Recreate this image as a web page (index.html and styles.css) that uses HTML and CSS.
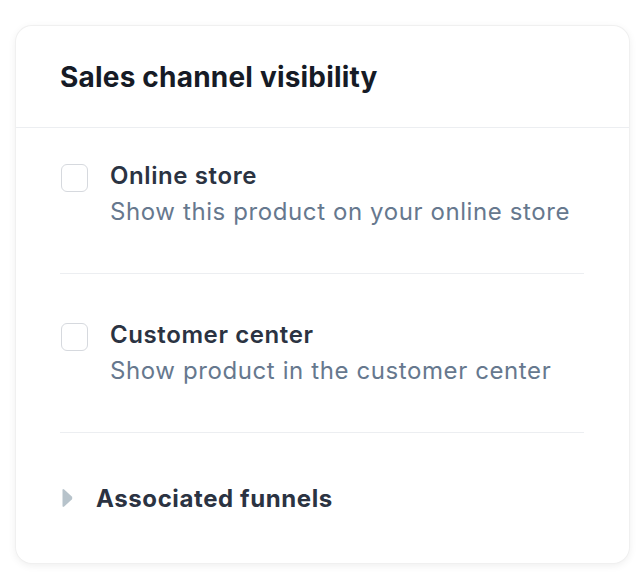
FILE: index.html
```html
<!DOCTYPE html>
<html lang="en">
<head>
    <meta charset="UTF-8">
    <meta name="viewport" content="width=device-width, initial-scale=1.0">
    <title>Sales channel visibility</title>
    <link rel="stylesheet" href="styles.css">
</head>
<body>
    <div class="card">
        <div class="card-header">
            <h2>Sales channel visibility</h2>
        </div>
        <div class="card-body">
            <label class="channel">
                <span class="checkbox"></span>
                <span class="channel-text">
                    <span class="channel-title">Online store</span>
                    <span class="channel-desc">Show this product on your online store</span>
                </span>
            </label>
            <label class="channel">
                <span class="checkbox"></span>
                <span class="channel-text">
                    <span class="channel-title">Customer center</span>
                    <span class="channel-desc">Show product in the customer center</span>
                </span>
            </label>
            <div class="funnels">
                <svg class="caret" width="11" height="20" viewBox="0 0 11 20">
                    <path d="M0.5 2.2 Q0.5 0.4 2.2 1.6 L9.8 8.4 Q11 10 9.8 11.6 L2.2 18.4 Q0.5 19.6 0.5 17.8 Z" fill="#b7c3cb"/>
                </svg>
                <span>Associated funnels</span>
            </div>
        </div>
    </div>
</body>
</html>
```

FILE: styles.css
```css
body { margin: 0; padding: 26px 15px 19px 16px; background: #ffffff; font-family: Inter, "Noto Sans", sans-serif; }
.card { background: #fff; border-radius: 16px; box-shadow: 0 0 0 1px #f0f0f0, 0 2px 8px rgba(0, 0, 0, 0.08); overflow: hidden; }
.card-header { height: 102px; display: flex; align-items: center; padding: 0 44px; border-bottom: 1px solid #eceef1; box-sizing: border-box; }
.card-header h2 { margin: 0; font-size: 28px; font-weight: 700; color: #161b26; letter-spacing: 0.2px; }
.card-body { padding: 0 45px 0 44px; }
.channel { display: flex; gap: 22px; padding: 46px 0; border-bottom: 1px solid #eceef1; cursor: pointer; }
.channel:first-child { padding-top: 33px; }
.checkbox { width: 27px; height: 28px; margin-top: 3px; margin-left: 1px; border: 1px solid #d6d9de; border-radius: 6px; box-sizing: border-box; flex-shrink: 0; }
.channel-text { display: flex; flex-direction: column; gap: 6px; letter-spacing: 0.6px; }
.channel-title { font-size: 24px; font-weight: 600; color: #2b3342; line-height: 30px; }
.channel-desc { font-size: 24px; color: #66788e; line-height: 30px; }
.funnels { height: 130px; display: flex; align-items: center; gap: 23px; font-size: 24px; font-weight: 700; color: #2b3342; letter-spacing: 0.6px; padding-left: 2px; box-sizing: border-box; }
.caret { display: block; }
```
